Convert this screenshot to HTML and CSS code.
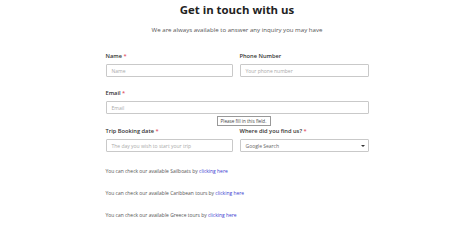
FILE: index.html
```html
<!DOCTYPE html>
<html>
<head>
<meta charset="utf-8">
<link rel="stylesheet" href="styles.css">
</head>
<body>
<main class="page">
  <h1 class="title">Get in touch with us</h1>
  <p class="subtitle">We are always available to answer any inquiry you may have</p>
  <form class="form">
    <div class="row">
      <div class="field">
        <label class="label">Name <span class="req">*</span></label>
        <div class="input"><span class="ph">Name</span></div>
      </div>
      <div class="field">
        <label class="label">Phone Number</label>
        <div class="input"><span class="ph">Your phone number</span></div>
      </div>
    </div>
    <div class="row single">
      <div class="field">
        <label class="label">Email <span class="req">*</span></label>
        <div class="input"><span class="ph">Email</span></div>
        <div class="tooltip">Please fill in this field.</div>
      </div>
    </div>
    <div class="row">
      <div class="field">
        <label class="label">Trip Booking date <span class="req">*</span></label>
        <div class="input"><span class="ph">The day you wish to start your trip</span></div>
      </div>
      <div class="field">
        <label class="label">Where did you find us? <span class="req">*</span></label>
        <div class="input select"><span class="val">Google Search</span><span class="arrow"></span></div>
      </div>
    </div>
  </form>
  <div class="links">
    <p class="link-line">You can check our available Sailboats by <a href="#">clicking here</a></p>
    <p class="link-line">You can check our available Caribbean tours by <a href="#">clicking here</a></p>
    <p class="link-line">You can check our available Greece tours by <a href="#">clicking here</a></p>
  </div>
</main>
</body>
</html>
```

FILE: styles.css
```css
* { box-sizing: border-box; }
html, body { margin: 0; padding: 0; background: #fff; }
body { font-family: "Open Sans", "Liberation Sans", sans-serif; color: #333; }
.page { width: 263px; margin: 0 auto; }
.title {
  margin: 1px 0 0;
  font-family: "Open Sans", sans-serif;
  font-weight: 700;
  font-size: 11.4px;
  line-height: 18px;
  text-align: center;
  color: #222;
  letter-spacing: 0;
}
.subtitle {
  margin: 6px -20px 0;
  font-size: 6.1px;
  line-height: 10px;
  text-align: center;
  color: #555;
}
.form { margin-top: 17px; }
.row { display: grid; grid-template-columns: 127px 129px; column-gap: 7px; }
.row.single { grid-template-columns: 1fr; margin-top: 12px; }
.row + .row:last-child { margin-top: 13px; }
.field { position: relative; }
.label {
  display: block;
  font-family: "Open Sans", sans-serif;
  font-weight: 600;
  font-size: 5.7px;
  line-height: 8px;
  color: #333;
}
.req { color: #e0485a; }
.input {
  margin-top: 4px;
  height: 13px;
  border: 1px solid #c9c9c9;
  border-radius: 1px;
  padding: 0 5px;
  display: flex;
  align-items: center;
  font-size: 5px;
}
.ph { color: #aaa; }
.select { justify-content: space-between; padding-right: 3px; }
.val { color: #666; }
.arrow {
  width: 0; height: 0;
  border-left: 2px solid transparent;
  border-right: 2px solid transparent;
  border-top: 2.5px solid #333;
}
.tooltip {
  position: absolute;
  left: 111px;
  top: 27px;
  width: 54px;
  height: 10px;
  border: 1px solid #999;
  background: #fff;
  font-size: 4.6px;
  line-height: 8px;
  padding: 0 3px;
  color: #444;
  white-space: nowrap;
}
.links { margin-top: 15px; }
.link-line {
  margin: 0 0 14px;
  font-size: 4.95px;
  line-height: 8px;
  color: #555;
}
.link-line a { color: #3b3bd0; text-decoration: none; }
```
